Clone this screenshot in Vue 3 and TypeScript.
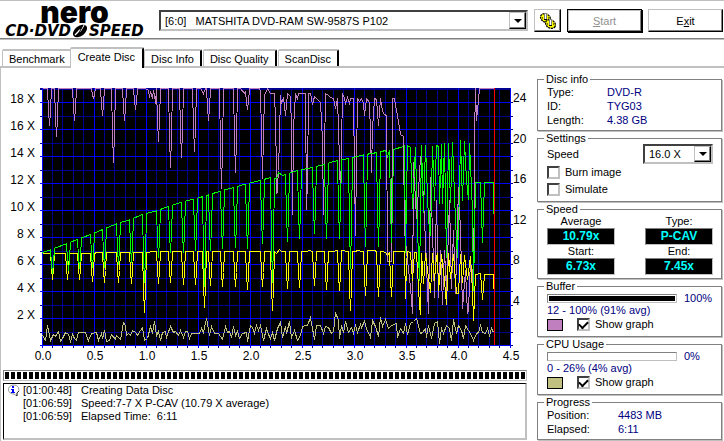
<script setup lang="ts">
import { ref } from 'vue'

type Point = [number, number]

const drives = ['[6:0]\u00a0\u00a0\u00a0MATSHITA DVD-RAM SW-9587S P102']
const drive = ref(drives[0])
const speed = ref('16.0 X')
const burnImage = ref(false)
const simulate = ref(false)
const showBuffer = ref(true)
const showCpu = ref(true)
const activeTab = ref('Create Disc')

const tabs = ['Benchmark', 'Create Disc', 'Disc Info', 'Disc Quality', 'ScanDisc']

const discInfo = [
  { label: 'Type:', value: 'DVD-R' },
  { label: 'ID:', value: 'TYG03' },
  { label: 'Length:', value: '4.38 GB' },
]

const speeds = [
  { label: 'Average', value: '10.79x' },
  { label: 'Type:', value: 'P-CAV' },
  { label: 'Start:', value: '6.73x' },
  { label: 'End:', value: '7.45x' },
]

const progress = [
  { label: 'Position:', value: '4483 MB' },
  { label: 'Elapsed:', value: '6:11' },
]

const log = [
  { time: '[01:00:48]', text: 'Creating Data Disc', icon: true },
  { time: '[01:06:59]', text: 'Speed:7-7 X P-CAV (10.79 X average)', icon: false },
  { time: '[01:06:59]', text: 'Elapsed Time:  6:11', icon: false },
]

const bufferLevel = 100
const cpuLevel = 0

// Plot area
const left = 42
const right = 510
const top = 88
const bottom = 345

const majorX = Array.from({ length: 10 }, (_, i) => left + 52 * i)
const minorX = majorX.slice(0, 9).flatMap((x) => [10, 20, 31, 41].map((d) => x + d))
const majorY = Array.from({ length: 10 }, (_, i) => bottom - 27 * i)
const minorY = majorY.map((y) => y - 13)
const ticksRight = Array.from({ length: 19 }, (_, i) => Math.round(bottom - 13.5 * i))
const labelsX = majorX.map((x, i) => ({ x: x + 1, text: (i * 0.5).toFixed(1) }))
const labelsLeft = majorY.slice(1).map((y, i) => ({ y: y + 1, text: `${(i + 1) * 2} X` }))
const labelsRight = [4, 8, 12, 16, 20, 24].map((v) => ({ y: Math.round(bottom - v * 10.125), text: String(v) }))

function parse(source: string): Point[] {
  return source.trim().split(/\s+/).map((pair) => pair.split(',').map(Number) as Point)
}

function levelAt(envelope: Point[], x: number): number {
  for (let i = 1; i < envelope.length; i++) {
    const [x0, y0] = envelope[i - 1]
    const [x1, y1] = envelope[i]
    if (x <= x1) return y0 + ((y1 - y0) * (x - x0)) / (x1 - x0)
  }
  return envelope[envelope.length - 1][1]
}

// Cuts narrow drops into a smooth envelope
function withDips(envelope: Point[], dips: Point[]): Point[] {
  const out = envelope.filter(([x]) => !dips.some(([d]) => Math.abs(x - d) < 3))
  for (const [x, y] of dips) {
    const a = levelAt(envelope, x - 2)
    const b = levelAt(envelope, x + 2)
    out.push([x - 2, a], [x - 1, a + (y - a) * 0.6], [x, y], [x + 1, b + (y - b) * 0.6], [x + 2, b])
  }
  return out.sort((p, q) => p[0] - q[0])
}

const toPoints = (points: Point[]) => points.map(([x, y]) => `${x},${y}`).join(' ')

const buffer = toPoints([
  ...withDips(
    parse('42,88 145,88 148,90 149,97 150,91 152,98 153,90 154,94 155,103 156,88 200,88 203,93 205,88 240,88 244,93 246,88 259,88'),
    parse('49,125 56,136 74,120 93,98 102,115 113,162 124,120 135,109 158,141 170,167 181,157 194,151 208,120 221,188 235,172 247,109'),
  ),
  ...parse(`260,91 261,134 262,178 263,134 264,95 267,88 270,93 274,93 275,120 276,170 276.5,193 278,170 279,136 280,95 281,103 283,97 285,115 287,93 290,96
    291,128 292,214 293,128 295,93 297,99 298,93 305,93 306,209 307,180 308,93 310,93 312,104 314,96 317,99 320,102 322,140 323,214 325,93 328,95
    330,97 333,98 335,108 337,98 339,160 340,198 342,93 344,98 345,103 347,97 349,103 350,98 353,98 354,170 355,235 356,160 357,98 359,101 361,98 363,103
    364,115 366,98 369,102 370,134 371,172 372,128 374,98 376,99 378,125 380,98 382,111 384,114 386,115 387,261 391,261 392,98 394,98 396,110
    398,121 400,134 403,136 404,230 407,260 410,287 412,313 413,162 416,218 418,190 420,156 422,180 425,240 427,290 428,313 430,177 432,230 434,297
    436,200 438,297 440,250 442,304 444,250 446,290 449,200 451,288 453,230 455,293 458,187 460,230 462,308 465,270 467,313 468,309 470,260
    472,290 474,208 474,137 475,88 476,120 478,100 479,88 494,88`),
])

const rotation = toPoints([
  ...withDips(
    parse('42,253 94,253 96,252 148,252 151,251 274,251 276,253 279,249 281,251 306,251 309,250 312,251 333,251 336,250 338,251 343,250 346,251 354,251 358,250 361,251 373,250 377,251 382,251 385,252 387,255 389,252 393,251 404,251'),
    parse('52,279 67,279 79,279 92,281 104,282 118,282 131,283 144,312 158,283 170,282 183,284 195,284 204,307 210,285 222,286 235,286 247,289 262,286 272,310 287,288 299,287 314,285 326,289 339,290 350,310 365,295 378,296 391,296'),
  ),
  ...parse(`405,298 406,265 407,251 410,252 412,280 414,252 416,252 419,305 420,314 421,253 423,283 425,253 427,270 430,292 432,253 434,280 436,256 437,253 438,290
    440,270 441,254 444,280 446,304 448,253 450,278 453,254 456,293 458,293 460,254 462,282 464,255 467,279 470,256 472,290 473,320 475,274 480,273
    482,299 484,274 493,274 493,288`),
])

const transfer = toPoints([
  ...withDips(
    parse('42,252 51,249 77,239 95,232 107,227 117,223 130,219 142,214 157,210 168,206 180,202 203,196 222,190 233,187 247,183 260,180 270,177 276,178 278,172 282,175 297,170 312,167 323,164 337,160 348,158 365,154 377,152 385,150 387,156 389,150 393,149 403,146 404,145'),
    parse('52,273 68,270 79,268 92,267 104,267 118,264 131,262 144,282 158,257 170,252 183,252 195,250 204,286 210,250 222,248 235,247 247,248 262,243 272,282 287,241 299,238 314,233 326,238 339,238 350,268 365,246 378,246 391,242'),
  ),
  ...parse(`405,252 407,145 410,147 412,208 415,147 417,230 419,280 421,145 423,212 425,145 428,220 430,235 432,146 434,200 436,145 438,146 439,203 441,144 442,203 444,143
    446,257 448,143 450,202 452,142 455,220 457,257 459,190 460,140 462,200 464,141 466,180 468,199 469,143 472,210 473,290 475,182 480,182 482,242 484,182 493,182
    493,213`),
])

const cpu = toPoints(
  parse(`42,335 45,340 47,325 50,340 53,334 55,336 58,331 60,341 62,338 65,332 68,334 70,341 72,334 74,338 76,340 78,332 82,332 85,332 87,338 88,340 91,333 96,332
    98,340 101,333 102,338 104,330 106,341 109,340 111,334 115,339 116,335 120,339 123,322 125,325 126,335 128,333 130,335 132,330 135,332 137,335 140,330 142,327 144,340
    147,338 150,326 152,333 154,321 156,335 158,331 160,340 162,332 165,331 166,337 170,326 173,332 175,331 178,335 180,330 183,337 185,331 187,331 189,338 191,333 195,333
    199,333 201,328 203,332 206,318 209,335 211,326 214,333 218,333 222,339 225,326 227,332 229,331 231,337 233,326 235,335 237,331 239,338 242,333 246,332 247,341 250,325
    252,327 254,333 256,325 258,330 260,325 263,340 266,328 268,334 270,338 272,332 274,340 277,328 280,322 282,337 285,326 286,333 289,321 291,337 294,330 297,340 300,335
    302,326 305,325 307,325 310,317 311,323 314,339 316,325 320,325 323,333 325,326 328,327 331,333 333,331 335,312 338,320 339,338 341,325 343,332 345,321 348,332 351,327
    353,333 355,325 357,332 360,324 361,327 364,321 366,328 370,337 372,320 375,326 378,336 380,317 382,326 385,319 388,328 391,325 396,323 397,337 400,328 403,333 405,323
    407,334 410,323 413,321 416,318 420,333 422,332 425,328 426,337 428,325 431,338 434,323 437,321 439,343 441,328 443,333 446,325 449,328 451,340 453,319 456,333 458,325
    461,330 463,338 465,325 468,330 470,333 473,340 476,333 478,332 480,325 482,332 485,333 487,328 489,335 491,328 493,332`),
)
</script>

<template>
  <div class="app">
    <header class="toolbar">
      <div class="logo">
        <span class="brand">nero</span>
        <span class="product">
          <span>CD·DVD</span>
          <svg class="disc" width="18" height="14" viewBox="0 0 18 14" aria-hidden="true">
            <ellipse cx="9" cy="7" rx="8" ry="5" transform="rotate(-38 9 7)" fill="#000" />
            <path d="M4 11 L8 7 M10 6 L13 1" stroke="#fff" stroke-width="1.4" />
            <ellipse cx="9" cy="6.600" rx="2" ry="1.200" transform="rotate(-38 9 7)" fill="#fff" />
            <path d="M6 13 L12 1" stroke="#000" stroke-width="1" />
          </svg>
          <span>SPEED</span>
        </span>
      </div>
      <div class="combo drive">
        <select v-model="drive" aria-label="Drive">
          <option v-for="d in drives" :key="d" :value="d">{{ d }}</option>
        </select>
        <span class="arrow" aria-hidden="true"></span>
      </div>
      <button class="btn tool" type="button" aria-label="Options">
        <svg width="18" height="18" viewBox="0 0 18 18" aria-hidden="true">
          <g fill="#ff0" stroke="#000" stroke-width="1.3" stroke-dasharray="2 0.7">
            <ellipse cx="6.500" cy="6" rx="5.200" ry="4" transform="rotate(30 6.500 6)" />
            <ellipse cx="11.500" cy="12" rx="5.200" ry="4" transform="rotate(30 11.500 12)" />
          </g>
          <g shape-rendering="crispEdges">
            <path d="M5 1h3v6h-3zM10 7h3v6h-3z" fill="#808080" />
            <path d="M6 2h1v5h-1zM11 8h1v5h-1z" fill="#fff" />
            <path d="M5 7h3v1h-3zM10 13h3v1h-3z" fill="#000" />
            <path d="M3 5h1v2h-1zM9 5h1v2h-1zM8 11h1v2h-1zM14 11h1v2h-1z" fill="#808000" />
          </g>
        </svg>
      </button>
      <button class="btn start" type="button" disabled><u>S</u>tart</button>
      <button class="btn" type="button">E<u>x</u>it</button>
    </header>

    <nav class="tabs" role="tablist">
      <button
        v-for="tab in tabs"
        :key="tab"
        type="button"
        role="tab"
        class="tab"
        :class="{ active: tab === activeTab }"
        :aria-selected="tab === activeTab"
        @click="activeTab = tab"
      >
        {{ tab }}
      </button>
    </nav>

    <main class="page">
      <section class="left">
        <svg class="chart" viewBox="1 68 536 300" role="img" aria-label="Write speed graph">
          <rect :x="left" :y="top" :width="right - left + 1" :height="bottom - top + 1" fill="#000" />
          <g fill="#000090" shape-rendering="crispEdges">
            <rect v-for="x in minorX" :key="'vx' + x" :x="x" :y="top" width="1" :height="bottom - top + 3" />
            <rect v-for="y in minorY" :key="'hy' + y" :x="left - 2" :y="y" :width="right - left + 2" height="1" />
            <rect :x="left - 2" :y="top" :width="right - left + 2" height="1" />
            <rect v-for="y in ticksRight" :key="'tr' + y" :x="right" :y="y" width="3" height="1" />
          </g>
          <g fill="#00f" shape-rendering="crispEdges">
            <rect v-for="x in majorX" :key="'mx' + x" :x="x" :y="top" width="1" :height="bottom - top + 3" />
            <rect v-for="y in majorY" :key="'my' + y" :x="left - 2" :y="y" :width="right - left + 3" height="1" />
          </g>
          <g fill="none" stroke-width="1" shape-rendering="crispEdges" transform="translate(0.5 0.5)">
            <polyline v-if="showBuffer" :points="buffer" stroke="#c080c0" />
            <polyline :points="rotation" stroke="#ff0" />
            <polyline :points="transfer" stroke="#0f0" />
            <polyline v-if="showCpu" :points="cpu" stroke="#c0c080" />
          </g>
          <rect x="494" :y="top" width="1" :height="bottom - top" fill="#f00" />
          <g class="axis">
            <text v-for="l in labelsLeft" :key="l.text" x="35" :y="l.y" text-anchor="end">{{ l.text }}</text>
            <text v-for="l in labelsRight" :key="l.text" x="513" :y="l.y">{{ l.text }}</text>
            <text v-for="l in labelsX" :key="l.text" :x="l.x" y="360" text-anchor="middle">{{ l.text }}</text>
          </g>
        </svg>
        <div class="status">
          <div class="blocks" role="progressbar" aria-label="Total progress" aria-valuenow="100"><i></i></div>
          <ul class="log">
            <li v-for="(entry, i) in log" :key="i">
              <span class="mark">
                <svg v-if="entry.icon" width="13" height="13" viewBox="0 0 13 13" aria-hidden="true">
                  <path d="M6 1a5 4.500 0 1 0 1 9l3 2v-3a5 4.500 0 0 0-4-8z" fill="#fff" stroke="#999" />
                  <path d="M9 11l1 1v-3l2-2" fill="none" stroke="#333" />
                  <path d="M5 2h2v2h-2zM4 5h3v3h1v1h-4v-1h1v-2h-1z" fill="#00f" />
                </svg>
              </span>
              <span class="time">{{ entry.time }}</span>
              <span>{{ entry.text }}</span>
            </li>
          </ul>
        </div>
      </section>

      <aside class="side">
        <fieldset>
          <legend>Disc info</legend>
          <dl class="facts">
            <template v-for="row in discInfo" :key="row.label">
              <dt>{{ row.label }}</dt>
              <dd>{{ row.value }}</dd>
            </template>
          </dl>
        </fieldset>

        <fieldset>
          <legend>Settings</legend>
          <div class="setting">
            <label for="speed">Speed</label>
            <div class="combo">
              <select id="speed" v-model="speed">
                <option>16.0 X</option>
              </select>
              <span class="arrow" aria-hidden="true"></span>
            </div>
          </div>
          <label class="check"><input v-model="burnImage" type="checkbox" />Burn image</label>
          <label class="check"><input v-model="simulate" type="checkbox" />Simulate</label>
        </fieldset>

        <fieldset>
          <legend>Speed</legend>
          <div class="speeds">
            <div v-for="s in speeds" :key="s.label" class="meter">
              <span>{{ s.label }}</span>
              <output>{{ s.value }}</output>
            </div>
          </div>
        </fieldset>

        <fieldset>
          <legend>Buffer</legend>
          <div class="gauge">
            <div class="bar"><i :style="{ width: bufferLevel + '%' }"></i></div>
            <span>{{ bufferLevel }}%</span>
          </div>
          <p class="range">12 - 100% (91% avg)</p>
          <div class="graph">
            <i class="swatch buffer"></i>
            <label class="check"><input v-model="showBuffer" type="checkbox" />Show graph</label>
          </div>
        </fieldset>

        <fieldset>
          <legend>CPU Usage</legend>
          <div class="gauge">
            <div class="bar"><i :style="{ width: cpuLevel + '%' }"></i></div>
            <span>{{ cpuLevel }}%</span>
          </div>
          <p class="range">0 - 26% (4% avg)</p>
          <div class="graph">
            <i class="swatch cpu"></i>
            <label class="check"><input v-model="showCpu" type="checkbox" />Show graph</label>
          </div>
        </fieldset>

        <fieldset>
          <legend>Progress</legend>
          <dl class="facts wide">
            <template v-for="row in progress" :key="row.label">
              <dt>{{ row.label }}</dt>
              <dd>{{ row.value }}</dd>
            </template>
          </dl>
        </fieldset>
      </aside>
    </main>
  </div>
</template>

<style>
body {
  background: #fff;
}
</style>

<style scoped>
* {
  box-sizing: border-box;
}
.app {
  display: flex;
  flex-direction: column;
  min-height: 100vh;
  font: 11px/14px "Liberation Sans", Arial, sans-serif;
  color: #000;
  background: #fff;
}
button,
select,
input {
  font: inherit;
  color: inherit;
  margin: 0;
}

.toolbar {
  display: flex;
  align-items: flex-start;
  gap: 6px;
  padding: 8px 1px 6px 2px;
  border-top: 1px solid #c0c0c0;
  border-bottom: 1px solid #808080;
  box-shadow: 0 1px 0 #c0c0c0;
}
.logo {
  display: flex;
  flex-direction: column;
  align-items: center;
  width: 151px;
  height: 25px;
  margin-top: -8px;
  padding-right: 6px;
}
.brand {
  font: 900 30px/22px Inter, "Liberation Sans", sans-serif;
}
.product {
  display: flex;
  align-items: center;
  font: italic bold 15px/16px "DejaVu Sans", sans-serif;
}
.disc {
  flex: none;
}

.combo {
  display: grid;
  align-items: stretch;
  height: 20px;
  border: 2px solid #000;
  border-color: #404040 #c0c0c0 #c0c0c0 #404040;
}
.combo > * {
  grid-area: 1 / 1;
}
.combo select {
  appearance: none;
  width: 100%;
  border: 0;
  border-radius: 0;
  padding: 0 18px 0 4px;
  background: #fff;
  outline: 0;
}
.drive {
  flex: 1;
  margin-top: 1px;
  height: 21px;
}
.arrow {
  justify-self: end;
  display: grid;
  place-items: center;
  width: 17px;
  border: 1px solid #000;
  border-color: #c0c0c0 #000 #000 #c0c0c0;
  box-shadow: inset -1px -1px 0 #808080;
  background: #fff;
  pointer-events: none;
}
.arrow::before {
  content: "";
  border: 4px solid transparent;
  border-top-color: #000;
  border-bottom-width: 0;
}
.btn {
  width: 75px;
  height: 23px;
  padding: 0;
  border: 1px solid #000;
  border-color: #c0c0c0 #000 #000 #c0c0c0;
  border-radius: 0;
  box-shadow: inset -1px -1px 0 #808080;
  background: #fff;
}
.tool {
  display: grid;
  place-items: center;
  width: 27px;
}
.start {
  border-color: #000;
  box-shadow: inset 1px 1px 0 #c0c0c0, inset -1px -1px 0 #808080, 1px 1px 0 #000;
  color: #909090;
}

.tabs {
  display: flex;
  align-items: flex-end;
  height: 27px;
  padding: 0 2px;
}
.tab {
  height: 17px;
  margin-right: 1px;
  padding: 0 6px;
  border: 1px solid #c0c0c0;
  border-top-width: 2px;
  border-right: 2px solid #000;
  border-bottom: 0;
  border-radius: 2px 2px 0 0;
  background: #fff;
  white-space: nowrap;
}
.tab.active {
  z-index: 1;
  height: 21px;
  margin: 0 0 -2px -4px;
  padding: 0 7px 3px;
}

.page {
  flex: 1;
  display: grid;
  grid-template-columns: minmax(0, 1fr) 187px;
  border-top: 2px solid #c0c0c0;
  border-left: 1px solid #c0c0c0;
}
.left {
  display: flex;
  flex-direction: column;
}
.chart {
  display: block;
  width: 100%;
}
.axis {
  font-size: 12px;
}
.status {
  flex: 1;
  display: flex;
  flex-direction: column;
  gap: 2px;
  padding: 2px 10px 3px 2px;
}
.blocks {
  border: 1px solid #808080;
  border-color: #808080 #c0c0c0 #c0c0c0 #808080;
  padding: 1px;
}
.blocks i {
  display: block;
  height: 7px;
  background: repeating-linear-gradient(90deg, #000 0 4px, #fff 4px 6px);
}
.log {
  flex: 1;
  margin: 0;
  padding: 0 3px;
  list-style: none;
  line-height: 13px;
  border: 2px solid #c0c0c0;
  border-top: 1px solid #000;
  border-left: 1px solid #000;
}
.log li {
  display: flex;
  white-space: pre;
}
.mark {
  width: 16px;
  height: 13px;
}
.time {
  width: 58px;
}

.side {
  display: flex;
  flex-direction: column;
  gap: 1px;
  padding: 5px 2px 3px 0;
}
fieldset {
  min-width: 0;
  margin: 0;
  padding: 0 8px 3px 9px;
  border: 1px solid #808080;
  box-shadow: 1px 1px 0 #c0c0c0;
}
legend {
  margin-left: -3px;
  padding: 0 2px;
  line-height: 12px;
  background: #fff;
}
.facts {
  display: grid;
  grid-template-columns: 60px 1fr;
  margin: 0;
}
.facts.wide {
  grid-template-columns: 71px 1fr;
}
dd {
  margin: 0;
  color: #000080;
}
.setting {
  display: flex;
  justify-content: space-between;
  align-items: center;
}
.setting .combo {
  width: 70px;
}
.check {
  display: flex;
  align-items: center;
  gap: 5px;
  line-height: 17px;
}
.check input {
  appearance: none;
  display: grid;
  place-items: center;
  width: 13px;
  height: 13px;
  border: 2px solid #c0c0c0;
  border-top-color: #404040;
  border-left-color: #404040;
  background: #fff;
}
.check input:checked::before {
  content: "";
  width: 7px;
  height: 4px;
  margin-bottom: 2px;
  border: solid #000;
  border-width: 0 0 2px 2px;
  transform: rotate(-45deg);
}
.speeds {
  display: grid;
  grid-template-columns: 68px 68px;
  justify-content: space-between;
}
.meter {
  display: flex;
  flex-direction: column;
  text-align: center;
  line-height: 13px;
}
output {
  border: 1px solid #808080;
  border-right-color: #c0c0c0;
  border-bottom-color: #c0c0c0;
  background: #000;
  color: #0ff;
  font-weight: bold;
  font-size: 12px;
  line-height: 15px;
}
.gauge {
  display: flex;
  align-items: center;
  gap: 7px;
  line-height: 12px;
  color: #000080;
}
.bar {
  flex: none;
  width: 130px;
  height: 9px;
  padding: 1px;
  border: 1px solid #808080;
  border-right-color: #c0c0c0;
  border-bottom-color: #c0c0c0;
}
.bar i {
  display: block;
  height: 100%;
  background: #000;
}
.range {
  margin: 0;
  line-height: 12px;
  color: #000080;
}
.graph {
  display: flex;
  align-items: center;
  gap: 14px;
}
.swatch {
  width: 16px;
  height: 12px;
  border: 1px solid #000;
}
.swatch.buffer {
  background: #c080c0;
}
.swatch.cpu {
  background: #c0c080;
}
</style>
